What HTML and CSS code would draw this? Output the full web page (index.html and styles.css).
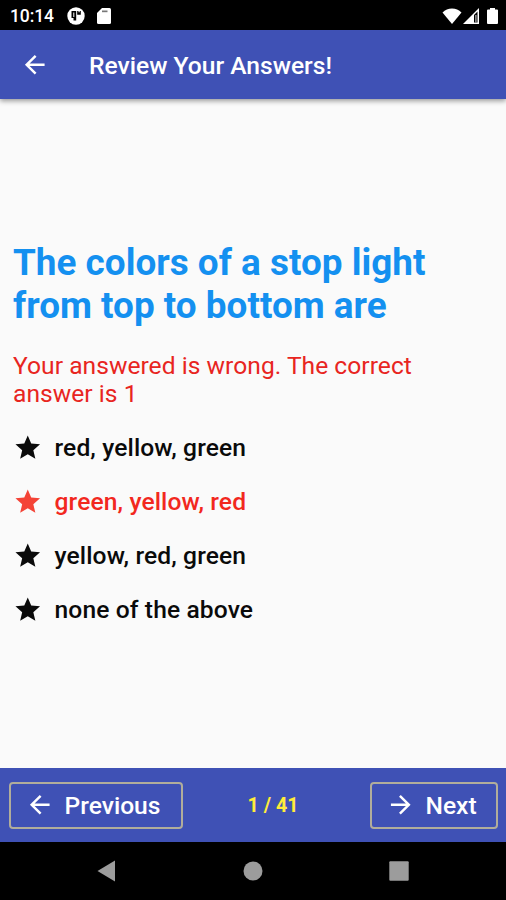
FILE: index.html
```html
<!DOCTYPE html>
<html lang="en">
<head>
    <meta charset="UTF-8">
    <meta name="viewport" content="width=device-width, initial-scale=1.0">
    <title>Review Your Answers!</title>
    <link rel="stylesheet" href="styles.css">
</head>
<body>
    <div class="status-bar">
        <span class="clock">10:14</span>
        <svg class="status-app" viewBox="0 0 18 18">
            <circle cx="9" cy="9" r="8.700" fill="#fff"/>
            <path d="M4.500 4h4.700v9.500H6.500V11h-2zM10.200 4h3.600v3.800h-3.600z" fill="#000"/>
            <path d="M6.300 5.500h1v4.500h-1zM11.500 4h1.200v1.200h-1.200z" fill="#fff"/>
        </svg>
        <svg class="status-card" viewBox="0 0 14 16">
            <path d="M5 0h7.500Q14 0 14 1.500v13q0 1.500-1.500 1.500h-11Q0 16 0 14.500V5z" fill="#fff"/>
            <path d="M5 2.500h5.500v1.700H5z" fill="#777"/>
        </svg>
        <div class="status-right">
            <svg class="wifi" viewBox="0 0 20 16"><path d="M0.500 4.500Q4.500 0.500 10 0.500t9.500 4L10 16z" fill="#fff"/></svg>
            <svg class="signal" viewBox="0 0 16 16">
                <path d="M16 0v16H0z" fill="#fff"/>
                <path d="M11 7l3.500-3.500v11H11z" fill="#000"/>
                <path d="M12.300 7h1.200v7.500h-1.200z" fill="#bbb"/>
            </svg>
            <svg class="battery" viewBox="0 0 11 16"><path d="M3 0h5v1.500h2q1 0 1 1V15q0 1-1 1H1q-1 0-1-1V2.500q0-1 1-1h2z" fill="#fff"/></svg>
        </div>
    </div>

    <header class="app-bar">
        <svg class="icon" viewBox="0 0 24 24"><path d="M20 11H7.830l5.590-5.590L12 4l-8 8 8 8 1.410-1.410L7.830 13H20v-2z"/></svg>
        <h1>Review Your Answers!</h1>
    </header>

    <main class="content">
        <h2 class="question">The colors of a stop light from top to bottom are</h2>
        <p class="result">Your answered is wrong. The correct answer is 1</p>
        <ul class="answers">
            <li>
                <svg class="icon" viewBox="0 0 24 24"><path d="M12 17.270L18.180 21l-1.640-7.030L22 9.240l-7.190-.61L12 2 9.190 8.630 2 9.240l5.460 4.730L5.820 21z"/></svg>
                <span>red, yellow, green</span>
            </li>
            <li class="wrong">
                <svg class="icon" viewBox="0 0 24 24"><path d="M12 17.270L18.180 21l-1.640-7.030L22 9.240l-7.190-.61L12 2 9.190 8.630 2 9.240l5.460 4.730L5.820 21z"/></svg>
                <span>green, yellow, red</span>
            </li>
            <li>
                <svg class="icon" viewBox="0 0 24 24"><path d="M12 17.270L18.180 21l-1.640-7.030L22 9.240l-7.190-.61L12 2 9.190 8.630 2 9.240l5.460 4.730L5.820 21z"/></svg>
                <span>yellow, red, green</span>
            </li>
            <li>
                <svg class="icon" viewBox="0 0 24 24"><path d="M12 17.270L18.180 21l-1.640-7.030L22 9.240l-7.190-.61L12 2 9.190 8.630 2 9.240l5.460 4.730L5.820 21z"/></svg>
                <span>none of the above</span>
            </li>
        </ul>
    </main>

    <footer class="bottom-bar">
        <button class="previous">
            <svg class="icon" viewBox="0 0 24 24"><path d="M20 11H7.830l5.590-5.590L12 4l-8 8 8 8 1.410-1.410L7.830 13H20v-2z"/></svg>
            <span>Previous</span>
        </button>
        <span class="counter">1 / 41</span>
        <button class="next">
            <svg class="icon" viewBox="0 0 24 24"><path d="M12 4l-1.410 1.410L16.170 11H4v2h12.170l-5.580 5.590L12 20l8-8z"/></svg>
            <span>Next</span>
        </button>
    </footer>

    <nav class="nav-bar">
        <svg viewBox="0 0 20 22"><path d="M18 0.500v21L0.500 11z"/></svg>
        <svg viewBox="0 0 20 22"><circle cx="10" cy="11" r="9.500"/></svg>
        <svg viewBox="0 0 20 22"><rect x="0.300" y="1.300" width="19.400" height="19.400" rx="1"/></svg>
    </nav>
</body>
</html>
```

FILE: styles.css
```css
* {
    box-sizing: border-box;
}
body {
    margin: 0;
    height: 900px;
    display: flex;
    flex-direction: column;
    overflow: hidden;
    background-color: #fafafa;
    font-family: Roboto, sans-serif;
}
h1, h2, p, ul {
    margin: 0;
    padding: 0;
}
.icon {
    width: 29.5px;
    height: 29.5px;
    flex: none;
    fill: currentColor;
}
.status-bar {
    height: 30px;
    flex: none;
    display: flex;
    align-items: center;
    padding: 1px 8px 0 10px;
    background-color: #000;
    color: #fff;
}
.clock {
    width: 57px;
    font-size: 17.5px;
    font-weight: 500;
    line-height: 20px;
    letter-spacing: -0.1px;
}
.status-app {
    width: 18px;
    height: 18px;
}
.status-card {
    width: 14px;
    height: 16px;
    margin-left: 12px;
}
.status-right {
    display: flex;
    align-items: center;
    margin-left: auto;
}
.wifi {
    width: 20px;
    height: 16px;
}
.signal {
    width: 16px;
    height: 16px;
    margin-left: 1px;
}
.battery {
    width: 11px;
    height: 16px;
    margin-left: 8px;
}
.app-bar {
    height: 69px;
    flex: none;
    display: flex;
    align-items: center;
    padding-left: 20px;
    background-color: #3f51b5;
    color: #fff;
    box-shadow: 0 2px 5px rgba(0, 0, 0, 0.4);
}
.app-bar h1 {
    margin-left: 39.5px;
    padding-top: 1px;
    font-size: 24.6px;
    font-weight: 500;
}
.content {
    flex: 1;
    display: flex;
    flex-direction: column;
    justify-content: center;
    padding: 10px 13px 0;
}
.question {
    font-size: 36.9px;
    font-weight: 700;
    line-height: 43px;
    color: #1490f0;
}
.result {
    margin-top: 25px;
    font-size: 24.6px;
    line-height: 28.5px;
    letter-spacing: 0.03px;
    color: #e8251f;
}
.answers {
    list-style: none;
    margin-top: 12px;
}
.answers li {
    height: 54px;
    display: flex;
    align-items: center;
    font-size: 24.6px;
    font-weight: 500;
    letter-spacing: 0.12px;
    color: #0a0a0a;
}
.answers span {
    margin-left: 12px;
}
.answers .wrong {
    color: #f2281e;
}
.wrong .icon {
    fill: #f44336;
}
.bottom-bar {
    height: 74px;
    flex: none;
    display: flex;
    align-items: center;
    justify-content: space-between;
    padding: 0 8px 0 9px;
    background-color: #3f51b5;
}
.bottom-bar button {
    height: 47px;
    display: flex;
    align-items: center;
    padding: 0 0 0 14px;
    background: none;
    border: 2px solid #b1ad9b;
    border-radius: 4px;
    color: #fff;
    font-family: inherit;
    font-size: 24.6px;
    font-weight: 500;
}
.bottom-bar .previous {
    width: 174px;
}
.bottom-bar .next {
    width: 128px;
}
.bottom-bar button span {
    margin-left: 10px;
}
.counter {
    padding-right: 7px;
    font-size: 19.7px;
    font-weight: 700;
    color: #ffeb3b;
}
.nav-bar {
    height: 58px;
    flex: none;
    display: flex;
    justify-content: space-between;
    align-items: center;
    padding: 0 97px 0 97px;
    background-color: #000;
}
.nav-bar svg {
    width: 20px;
    height: 22px;
    fill: #9c9c9c;
}
```
